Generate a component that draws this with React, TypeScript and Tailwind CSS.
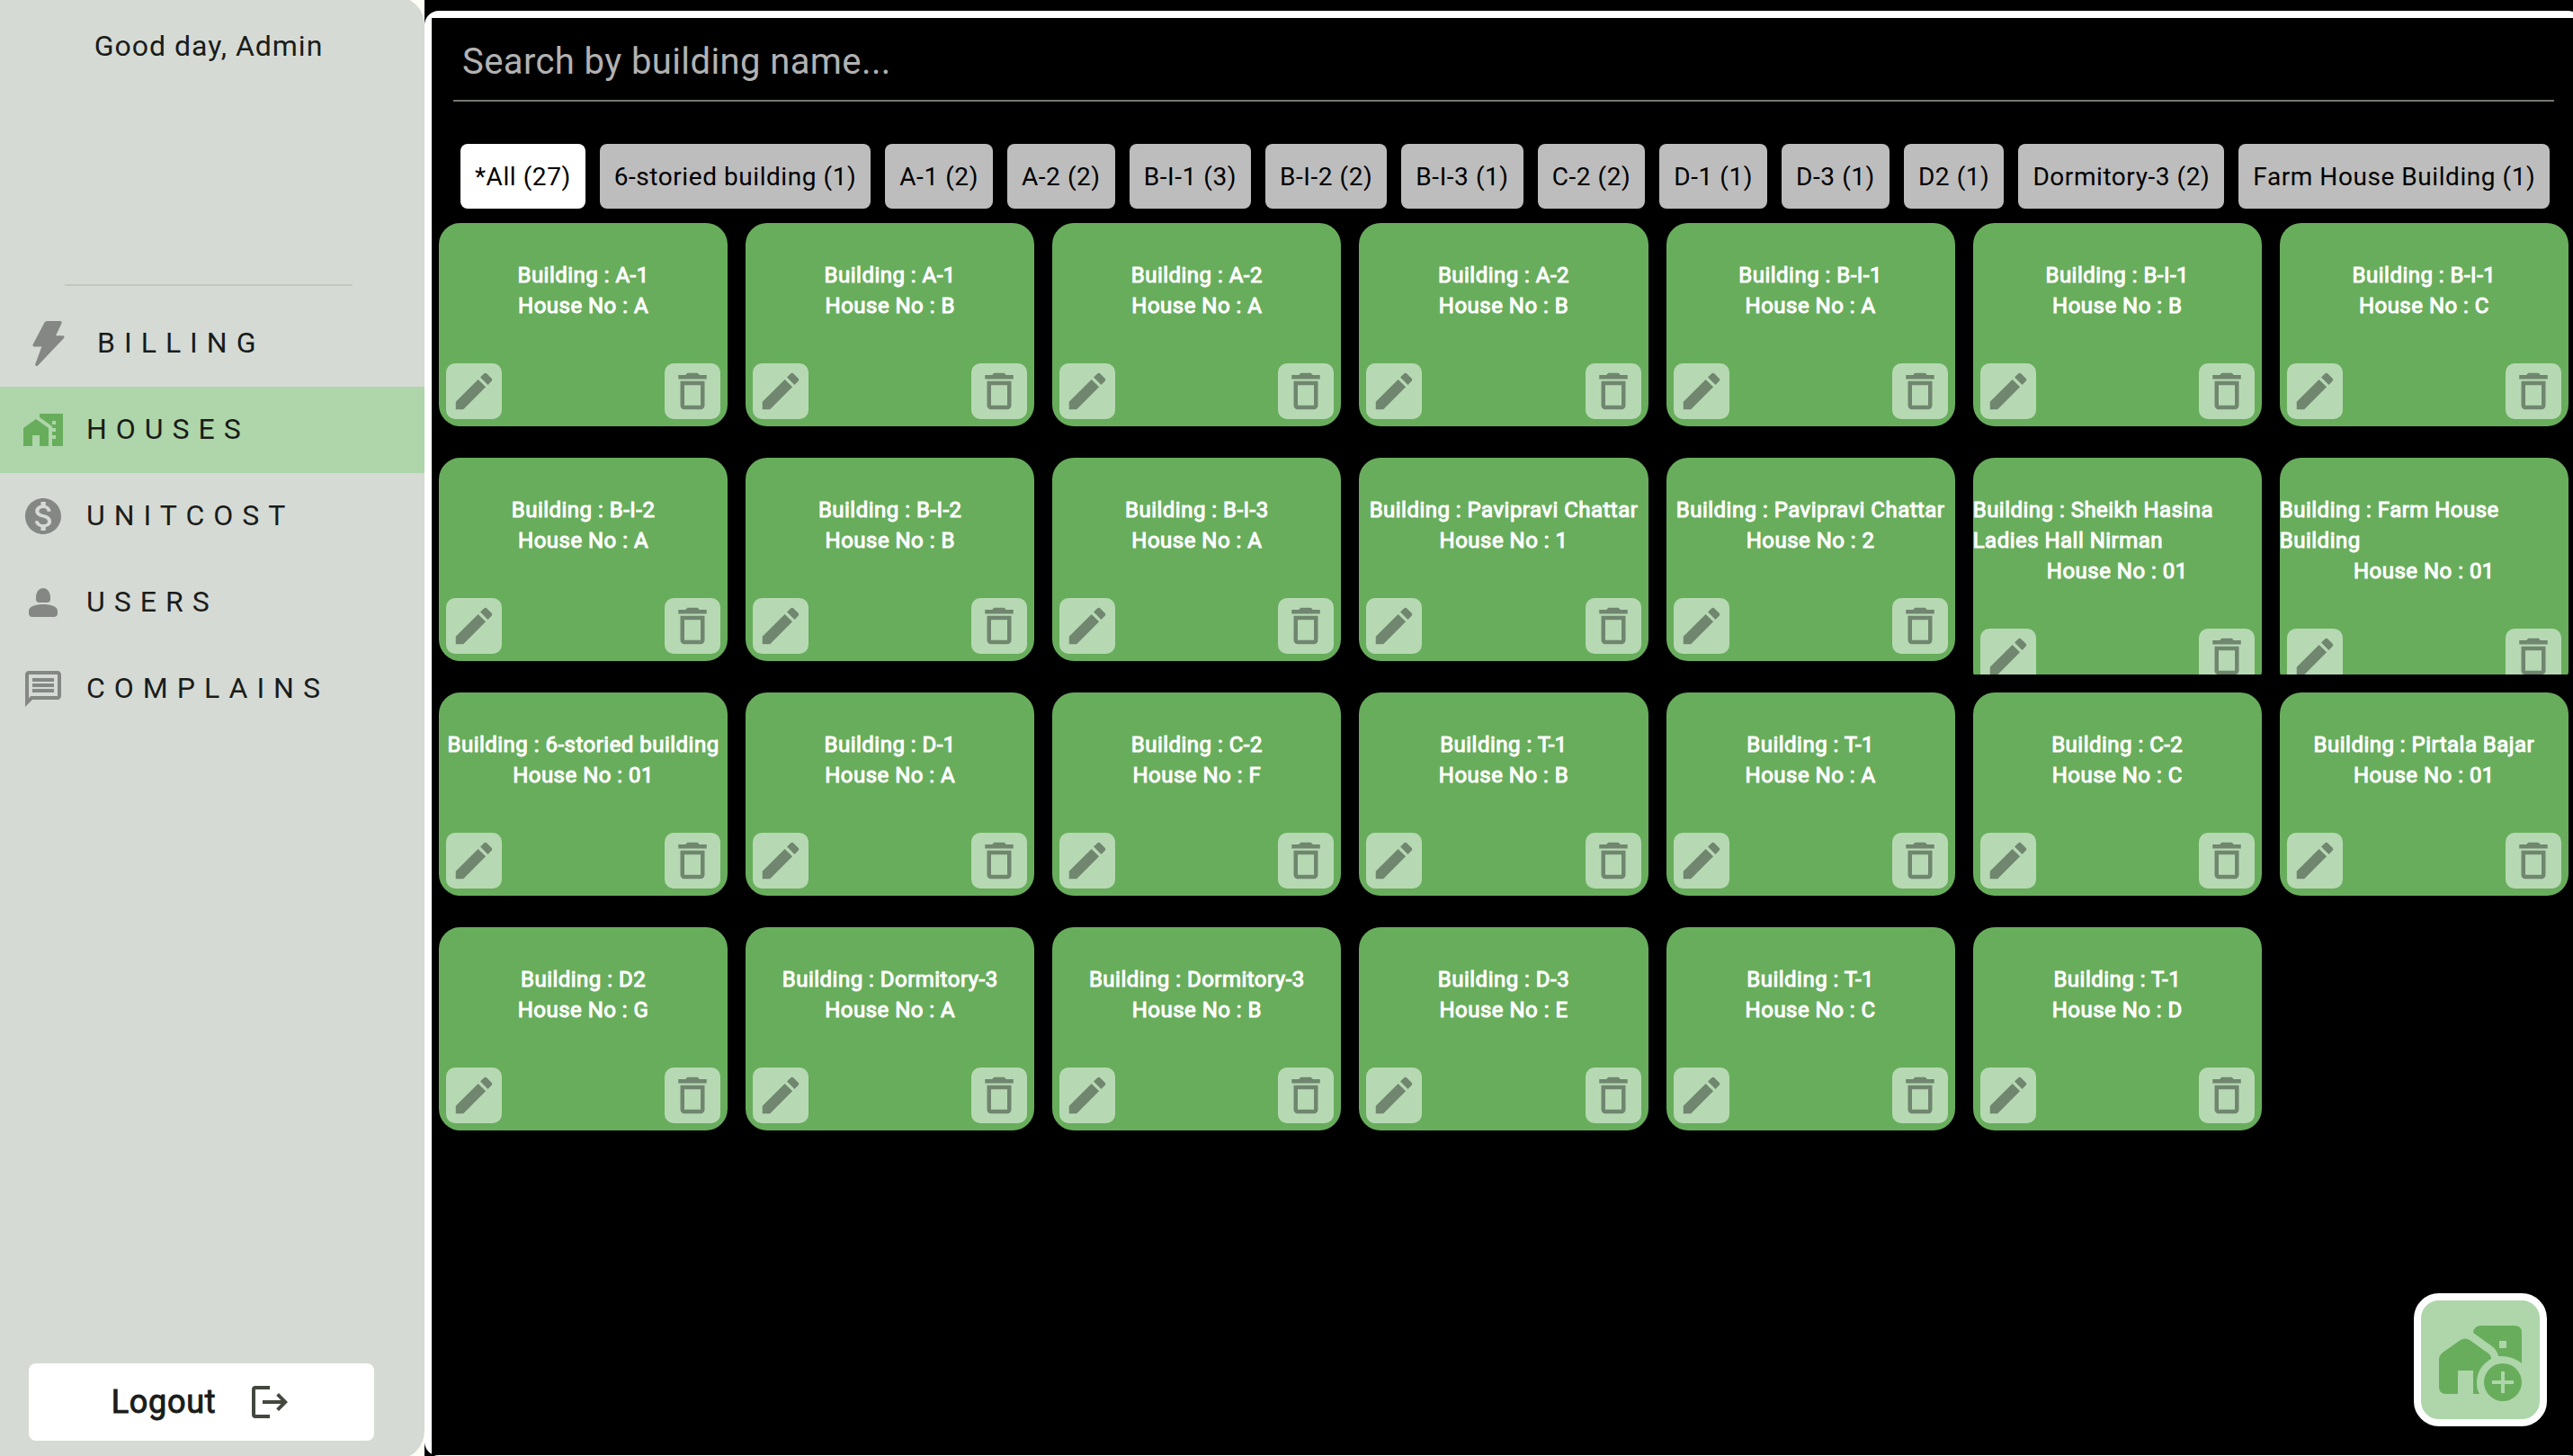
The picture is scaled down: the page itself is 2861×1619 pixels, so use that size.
import React from "react";

const nav = [
  { label: "BILLING", icon: "bolt" },
  { label: "HOUSES", icon: "houses" },
  { label: "UNITCOST", icon: "cost" },
  { label: "USERS", icon: "user" },
  { label: "COMPLAINS", icon: "message" },
];

const filters = [
  "*All (27)", "6-storied building (1)", "A-1 (2)", "A-2 (2)", "B-I-1 (3)", "B-I-2 (2)", "B-I-3 (1)",
  "C-2 (2)", "D-1 (1)", "D-3 (1)", "D2 (1)", "Dormitory-3 (2)", "Farm House Building (1)",
];

const houses: [string, string][] = [
  ["A-1", "A"], ["A-1", "B"], ["A-2", "A"], ["A-2", "B"], ["B-I-1", "A"], ["B-I-1", "B"], ["B-I-1", "C"],
  ["B-I-2", "A"], ["B-I-2", "B"], ["B-I-3", "A"], ["Pavipravi Chattar", "1"], ["Pavipravi Chattar", "2"],
  ["Sheikh Hasina Ladies Hall Nirman", "01"], ["Farm House Building", "01"],
  ["6-storied building", "01"], ["D-1", "A"], ["C-2", "F"], ["T-1", "B"], ["T-1", "A"], ["C-2", "C"], ["Pirtala Bajar", "01"],
  ["D2", "G"], ["Dormitory-3", "A"], ["Dormitory-3", "B"], ["D-3", "E"], ["T-1", "C"], ["T-1", "D"],
];

function NavIcon({ name }: { name: string }) {
  if (name === "bolt")
    return (
      <svg viewBox="0 0 36 52" className="h-[52px] w-9 fill-[#858785]" aria-hidden="true">
        <path d="M16.500 1h14.500q2.200.2 1.500 2.400L26 17.300h8q2.400.5 1 2.700L6.300 50.200q-2 1.700-3.300-.5L10.300 29.500H2q-2-.3-1.500-2.300L13.500 2.600Q14.500 1 16.500 1z" />
      </svg>
    );
  const paths: Record<string, string> = {
    houses:
      "M1 11v10h5v-6h4v6h5V11L8 6zM10 3v1.970l7 5V11h2v2h-2v2h2v2h-2v4h6V3H10zm9 6h-2V7h2v2z",
    cost:
      "M12 2C6.480 2 2 6.480 2 12s4.480 10 10 10 10-4.480 10-10S17.520 2 12 2zm1.410 16.090V20h-2.670v-1.930c-1.710-.36-3.160-1.460-3.270-3.400h1.960c.1 1.050.82 1.870 2.650 1.870 1.960 0 2.400-.98 2.400-1.590 0-.83-.44-1.610-2.670-2.140-2.480-.6-4.180-1.620-4.180-3.670 0-1.720 1.390-2.840 3.110-3.210V4h2.670v1.950c1.860.45 2.790 1.860 2.850 3.390H14.300c-.05-1.110-.64-1.870-2.220-1.870-1.500 0-2.400.68-2.400 1.640 0 .84.65 1.390 2.670 1.910s4.180 1.390 4.180 3.910c-.01 1.830-1.380 2.830-3.120 3.160z",
    user:
      "M8 9.500C8 6.500 9.300 4 12 4s4 2.500 4 5.500v.8c0 1.100-.7 1.700-1.800 1.700H9.800C8.700 12 8 11.400 8 10.300zM4 16.500c0-2.300 4-3.500 8-3.500s8 1.200 8 3.500V18c0 1.300-.8 2-2 2H6c-1.200 0-2-.7-2-2z",
    message:
      "M20 2H4c-1.100 0-2 .9-2 2v18l4-4h14c1.100 0 2-.9 2-2V4c0-1.100-.9-2-2-2zm0 14H5.170L4 17.170V4h16v12zM6 12h12v2H6zm0-3h12v2H6zm0-3h12v2H6z",
  };
  return (
    <svg
      viewBox="0 0 24 24"
      className={name === "houses" ? "size-12 fill-[#68ad5c]" : "size-12 fill-[#858785]"}
      aria-hidden="true"
    >
      <path d={paths[name]} />
    </svg>
  );
}

function HouseCard({ building, house }: { building: string; house: string }) {
  const button = "flex size-[62px] items-center justify-center rounded-[10px] bg-[#b6d9b3]";
  return (
    <li className="aspect-4/3 overflow-hidden">
      <article className="flex flex-col items-center rounded-3xl bg-[#68ad5c] pt-[41px] text-2xl leading-[34px] tracking-[0.02em] text-white [-webkit-text-stroke:1px_white]">
        <p>Building : {building}</p>
        <p>House No : {house}</p>
        <div className="mt-[47px] flex w-full justify-between px-2 pb-2">
          <button type="button" aria-label="Edit" className={button}>
            <svg viewBox="0 0 24 24" className="size-[54px] fill-[#70866f] stroke-none" aria-hidden="true">
              <path d="M3 17.250V21h3.750L17.810 9.940l-3.750-3.750L3 17.250zM20.710 7.040c.39-.39.39-1.020 0-1.410l-2.340-2.340c-.39-.39-1.020-.39-1.410 0l-1.830 1.830 3.750 3.750 1.830-1.830z" />
            </svg>
          </button>
          <button type="button" aria-label="Delete" className={button}>
            <svg viewBox="0 0 24 24" className="size-[54px] fill-[#70866f] stroke-none" aria-hidden="true">
              <path d="M6 19c0 1.100.9 2 2 2h8c1.100 0 2-.9 2-2V7H6v12zM8 9h8v10H8V9zm7.500-5l-1-1h-5l-1 1H5v2h14V4h-3.500z" />
            </svg>
          </button>
        </div>
      </article>
    </li>
  );
}

export default function App() {
  return (
    <div className="flex h-screen overflow-hidden bg-[#fdfdf6] font-['Roboto',sans-serif]">
      <aside className="-my-1 flex w-[472px] shrink-0 flex-col rounded-r-4xl bg-[#d5dad5] text-[#1a1c19]">
        <p className="mt-[31px] pr-2 text-center text-[32px] leading-12 tracking-[1px]">Good day, Admin</p>
        <hr className="mt-[241px] mr-20 ml-18 border-t-2 border-[#c3c8bc]" />
        <nav className="mt-4">
          <ul>
            {nav.map(({ label, icon }) => (
              <li key={label}>
                <a
                  href={"#" + label.toLowerCase()}
                  aria-current={icon === "houses" ? "page" : undefined}
                  className={
                    icon === "houses"
                      ? "flex h-24 items-center gap-6 bg-[#aed6aa] pl-6 text-[32px] tracking-[10px]"
                      : icon === "bolt"
                        ? "flex h-24 items-center gap-9 pl-9 text-[32px] tracking-[10px]"
                        : "flex h-24 items-center gap-6 pl-6 text-[32px] tracking-[10px]"
                  }
                >
                  <NavIcon name={icon} />
                  <span className="pb-0.5">{label}</span>
                </a>
              </li>
            ))}
          </ul>
        </nav>
        <button
          type="button"
          className="mt-auto mr-14 mb-[21px] ml-8 flex h-[86px] items-center justify-center gap-9 rounded-lg bg-white text-4xl tracking-[0.02em] [-webkit-text-stroke:1px_#1a1c19]"
        >
          Logout
          <svg viewBox="0 0 24 24" className="size-12 fill-[#43483f] stroke-none" aria-hidden="true">
            <path d="M4 3h8v2H4v14h8v2H4q-2 0-2-2V5q0-2 2-2zM8 11h10.200l-2.600-2.600 1.400-1.400L22 12l-5 5-1.400-1.400 2.600-2.600H8z" />
          </svg>
        </button>
      </aside>

      <div className="min-w-0 grow overflow-hidden bg-black pt-3">
        <main className="-mr-2.5 flex h-full flex-col rounded-2xl bg-white p-2 pr-2.5 pb-px">
          <div className="flex grow flex-col bg-black">
            <input
              type="search"
              aria-label="Search by building name"
              placeholder="Search by building name..."
              className="mr-[21px] ml-6 h-[93px] border-b-2 border-[#72796f] px-2.5 pt-1.5 text-[40px] tracking-[0.01em] text-white outline-none placeholder:text-[#b2b2b2]"
            />
            <div className="mt-[47px] flex gap-4 overflow-hidden pl-8">
              {filters.map((f, i) => (
                <button
                  key={f}
                  type="button"
                  className={
                    i === 0
                      ? "h-18 shrink-0 rounded-lg bg-white px-4 pt-0.5 text-[28px] tracking-[0.02em] text-black"
                      : "h-18 shrink-0 rounded-lg bg-[#bdbdbd] px-4 pt-0.5 text-[28px] tracking-[0.02em] text-black"
                  }
                >
                  {f}
                </button>
              ))}
            </div>
            <ul className="mt-4 mr-[5px] ml-2 grid grid-cols-7 gap-5">
              {houses.map(([b, h], i) => (
                <HouseCard key={i} building={b} house={h} />
              ))}
            </ul>
          </div>
        </main>
      </div>

      <button
        type="button"
        aria-label="Add house"
        className="fixed right-[29px] bottom-[33px] flex size-37 items-center justify-center rounded-[28px] border-8 border-white bg-[#aed6aa]"
      >
        <svg viewBox="0 0 132 132" className="size-33 shrink-0" aria-hidden="true">
          <g fill="#68ad5c">
            <path d="M58 36q1-8 9-8h37q8 0 8 8v34q-11-9-26-8-1-6-7-11zM20 66q0-5 4-8l20-14q5-3 10 0l21 15q3 2 3 6-16 9-16 27 0 7 3 12h-7V78H41v26H28q-8 0-8-8z" />
            <circle cx="91" cy="91" r="21" />
          </g>
          <path d="M87 45h8v8h-8zM89 79h4v10h10v4H93v10h-4V93H79v-4h10z" fill="#aed6aa" />
        </svg>
      </button>
    </div>
  );
}
